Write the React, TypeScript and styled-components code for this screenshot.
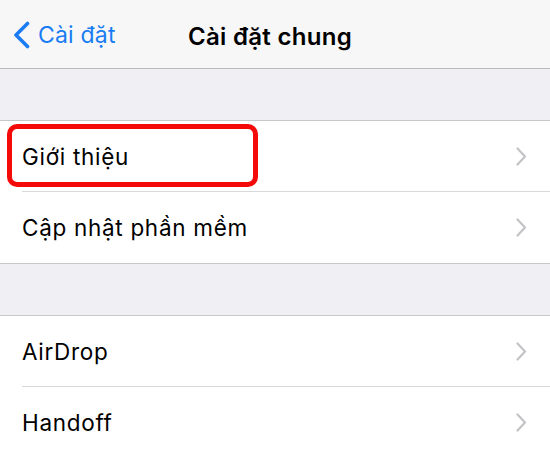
import * as React from 'react'
import styled, { createGlobalStyle } from 'styled-components'

const GlobalStyle = createGlobalStyle`
  html, body {
    margin: 0;
    padding: 0;
    background: #efeff4;
  }
  body {
    font-family: Inter, 'Noto Sans', 'Liberation Sans', sans-serif;
    -webkit-font-smoothing: antialiased;
  }
`

const Screen = styled.div`
  width: 550px;
  height: 450px;
  overflow: hidden;
  background: #efeff4;
  display: flex;
  flex-direction: column;
`

const NavBar = styled.header`
  height: 69px;
  box-sizing: border-box;
  padding-top: 5px;
  flex-shrink: 0;
  background: #f7f7f8;
  border-bottom: 1px solid #b9b9bc;
  display: grid;
  grid-template-columns: 1fr auto 1fr;
  align-items: center;
`

const BackButton = styled.div`
  display: flex;
  align-items: center;
  gap: 7px;
  padding-left: 12px;
  margin-top: -3px;
  color: #1a7cf2;
  font-size: 23px;
  letter-spacing: 0.2px;
`

const Title = styled.div`
  font-size: 24px;
  font-weight: 600;
  color: #000;
  letter-spacing: 0.3px;
  padding-right: 10px;
`

const Spacer = styled.div`
  height: 51px;
  flex-shrink: 0;
`

const Group = styled.section`
  background: #fff;
  border-top: 1px solid #c8c7cc;
  border-bottom: 1px solid #c8c7cc;
  flex-shrink: 0;
`

const Row = styled.div`
  position: relative;
  padding-left: 22px;
`

const RowInner = styled.div<{ $last?: boolean }>`
  height: ${(p) => (p.$last ? '71px' : '70px')};
  display: flex;
  align-items: center;
  justify-content: space-between;
  padding-right: 23px;
  border-bottom: ${(p) => (p.$last ? 'none' : '1px solid #d9d9dc')};
`

const Label = styled.span`
  font-size: 22.5px;
  color: #000;
  letter-spacing: 0.7px;
`

const Highlight = styled.div`
  position: absolute;
  left: 7px;
  top: 3px;
  width: 241px;
  height: 53px;
  border: 5px solid #f50a0a;
  border-radius: 10px;
`

const Chevron = () => (
  <svg width="11" height="19" viewBox="0 0 11 19">
    <path d="M1.5 1.5 L9 9.5 L1.5 17.5" fill="none" stroke="#c4c4c8" strokeWidth="2.2" strokeLinecap="round" strokeLinejoin="round" />
  </svg>
)

const BackChevron = () => (
  <svg width="19" height="28" viewBox="0 0 19 28">
    <path d="M15.5 2.5 L4 14 L15.5 25.5" fill="none" stroke="#1a7cf2" strokeWidth="3.6" strokeLinecap="round" strokeLinejoin="round" />
  </svg>
)

interface Item {
  label: string;
  highlight?: boolean;
}

const groups: Item[][] = [
  [{ label: 'Giới thiệu', highlight: true }, { label: 'Cập nhật phần mềm' }],
  [{ label: 'AirDrop' }, { label: 'Handoff' }],
]

const App: React.FunctionComponent = () => {
  return (
    <>
      <GlobalStyle />
      <Screen>
        <NavBar>
          <BackButton>
            <BackChevron />
            <span>Cài đặt</span>
          </BackButton>
          <Title>Cài đặt chung</Title>
          <div />
        </NavBar>
        {groups.map((items, gi) => (
          <React.Fragment key={gi}>
            <Spacer />
            <Group>
              {items.map((item, i) => (
                <Row key={item.label}>
                  <RowInner $last={i === items.length - 1}>
                    <Label>{item.label}</Label>
                    <Chevron />
                  </RowInner>
                  {item.highlight && <Highlight />}
                </Row>
              ))}
            </Group>
          </React.Fragment>
        ))}
      </Screen>
    </>
  )
}

export default App
